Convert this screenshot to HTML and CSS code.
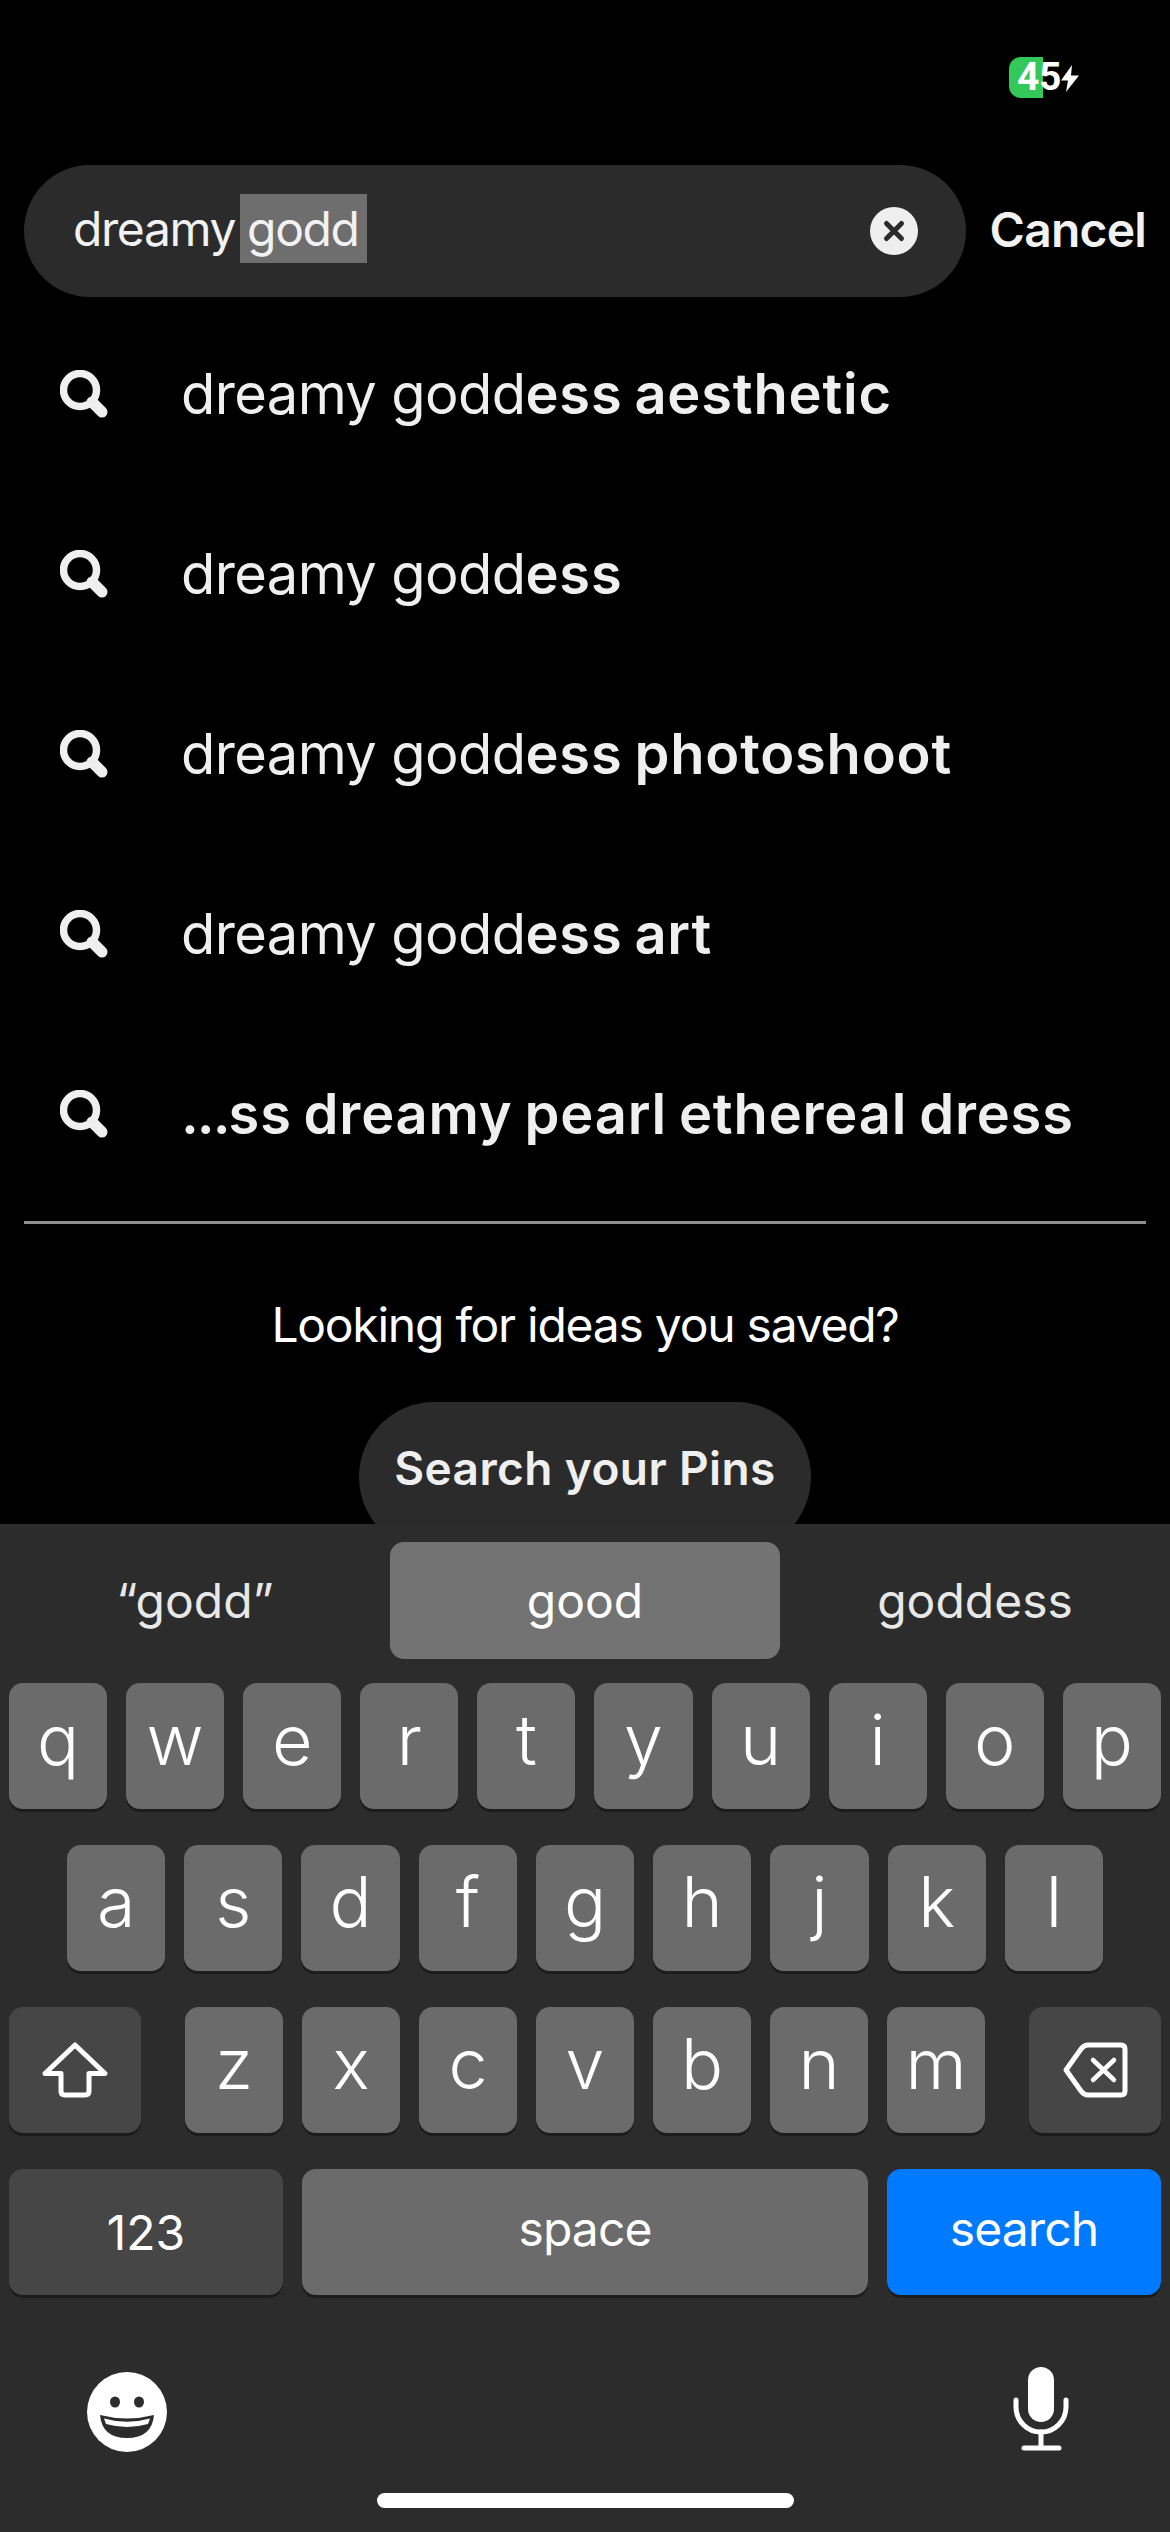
FILE: index.html
```html
<!DOCTYPE html>
<html lang="en">
<head>
    <meta charset="UTF-8">
    <meta name="viewport" content="width=device-width, initial-scale=1.0">
    <title>Search</title>
    <link rel="stylesheet" href="styles.css">
</head>
<body>
    <svg class="sprite" width="0" height="0">
        <symbol id="search-icon" viewBox="0 0 48 48">
            <circle cx="20" cy="20" r="16.5" fill="none" stroke="currentColor" stroke-width="7.5"/>
            <line x1="32" y1="32" x2="42" y2="42" stroke="currentColor" stroke-width="11" stroke-linecap="round"/>
        </symbol>
    </svg>

    <main class="screen">
        <div class="status">
            <div class="battery">
                <span class="battery-level"></span>
                <span class="battery-text">45</span>
            </div>
            <svg class="bolt" viewBox="0 0 18 27"><path d="M11 0 0 15.500h7L5 27 18 10.500h-8z" fill="#fff"/></svg>
        </div>

        <div class="search-bar">
            <div class="search-pill">
                <span class="query">dreamy <span class="selected">godd</span></span>
                <svg class="clear" viewBox="0 0 48 48">
                    <circle cx="24" cy="24" r="24" fill="#efefef"/>
                    <path d="M16.500 16.500l15 15m0-15l-15 15" stroke="#2b2b2b" stroke-width="5" stroke-linecap="round"/>
                </svg>
            </div>
            <span class="cancel">Cancel</span>
        </div>

        <ul class="results">
            <li class="result"><svg class="result-icon"><use href="#search-icon"/></svg><span>dreamy godd<b>ess aesthetic</b></span></li>
            <li class="result"><svg class="result-icon"><use href="#search-icon"/></svg><span>dreamy godd<b>ess</b></span></li>
            <li class="result"><svg class="result-icon"><use href="#search-icon"/></svg><span>dreamy godd<b>ess photoshoot</b></span></li>
            <li class="result"><svg class="result-icon"><use href="#search-icon"/></svg><span>dreamy godd<b>ess art</b></span></li>
            <li class="result"><svg class="result-icon"><use href="#search-icon"/></svg><span><b><span class="dots">...</span>ss dreamy pearl ethereal dress</b></span></li>
        </ul>

        <hr class="divider">

        <p class="saved-text">Looking for ideas you saved?</p>
        <div class="pins-button">Search your Pins</div>
    </main>

    <section class="keyboard">
        <div class="suggestions">
            <div class="suggestion">“godd”</div>
            <div class="suggestion suggestion-active">good</div>
            <div class="suggestion">goddess</div>
        </div>

        <div class="key-row">
            <div class="key">q</div><div class="key">w</div><div class="key">e</div><div class="key">r</div><div class="key">t</div>
            <div class="key">y</div><div class="key">u</div><div class="key">i</div><div class="key">o</div><div class="key">p</div>
        </div>
        <div class="key-row key-row-middle">
            <div class="key">a</div><div class="key">s</div><div class="key">d</div><div class="key">f</div><div class="key">g</div>
            <div class="key">h</div><div class="key">j</div><div class="key">k</div><div class="key">l</div>
        </div>
        <div class="key-row key-row-split">
            <div class="key key-dark key-side">
                <svg class="key-icon" viewBox="0 0 66 56"><path d="M33 3 63 31.500H47V49q0 4-4 4H23q-4 0-4-4V31.500H3z" fill="none" stroke="#fff" stroke-width="5" stroke-linejoin="round"/></svg>
            </div>
            <div class="letters">
                <div class="key">z</div><div class="key">x</div><div class="key">c</div><div class="key">v</div>
                <div class="key">b</div><div class="key">n</div><div class="key">m</div>
            </div>
            <div class="key key-dark key-side">
                <svg class="key-icon" viewBox="0 0 66 56"><path d="M4 28 19 7q3-4 7-4h33q4 0 4 4v42q0 4-4 4H26q-4 0-7-4z" fill="none" stroke="#fff" stroke-width="5" stroke-linejoin="round"/><path d="M31 18l21 20m0-20L31 38" stroke="#fff" stroke-width="4.500" stroke-linecap="round"/></svg>
            </div>
        </div>
        <div class="key-row">
            <div class="key key-dark key-wide key-label">123</div>
            <div class="key key-space key-label key-label-high">space</div>
            <div class="key key-blue key-wide key-label key-label-high">search</div>
        </div>

        <div class="keyboard-footer">
            <svg class="emoji" viewBox="0 0 80 80">
                <circle cx="40" cy="40" r="40" fill="#fff"/>
                <ellipse cx="28" cy="30" rx="5" ry="5.500" fill="#2c2c2c"/>
                <ellipse cx="52" cy="30" rx="5" ry="5.500" fill="#2c2c2c"/>
                <path d="M13 43Q40 50 67 43 65 66 40 66 15 66 13 43z" fill="#2c2c2c"/>
                <path d="M17 46.500Q40 53 63 46.500L61 52Q40 58 19 52z" fill="#fff"/>
            </svg>
            <svg class="mic" viewBox="0 0 64 90">
                <rect x="18" y="2" width="26" height="55" rx="13" fill="#fff"/>
                <path d="M6 35v7a25 25 0 0 0 50 0v-7" fill="none" stroke="#fff" stroke-width="5" stroke-linecap="round"/>
                <path d="M31 67v16M14 83h35" fill="none" stroke="#fff" stroke-width="5" stroke-linecap="round"/>
            </svg>
        </div>
        <div class="home-bar"></div>
    </section>
</body>
</html>
```

FILE: styles.css
```css
* {
    box-sizing: border-box;
}

html, body {
    margin: 0;
    padding: 0;
}

body {
    width: 1170px;
    height: 2532px;
    background-color: #000;
    color: #fff;
    font-family: 'Inter', 'Liberation Sans', sans-serif;
    overflow: hidden;
}

.sprite {
    display: block;
    height: 0;
}

.screen {
    height: 1524px;
    overflow: hidden;
}

/* status bar */
.status {
    height: 165px;
    padding: 57px 91px 0 0;
    display: flex;
    justify-content: flex-end;
    align-items: flex-start;
}

.battery {
    position: relative;
    width: 49px;
    height: 41px;
    margin-right: 3px;
}

.battery-level {
    position: absolute;
    left: 0;
    top: 0;
    width: 34px;
    height: 41px;
    background-color: #34c759;
    border-radius: 12px 0 0 12px;
}

.battery-text {
    position: absolute;
    left: 8px;
    top: 0;
    font-family: 'Roboto', sans-serif;
    font-size: 39px;
    line-height: 41px;
    font-weight: 700;
    letter-spacing: -0.5px;
}

.bolt {
    width: 18px;
    height: 27px;
    margin-top: 8px;
}

/* search field */
.search-bar {
    display: flex;
    align-items: center;
    padding: 0 24px;
    justify-content: space-between;
}

.search-pill {
    width: 942px;
    height: 132px;
    background-color: #2b2b2b;
    border-radius: 66px;
    padding: 0 48px 0 49px;
    display: flex;
    align-items: center;
    justify-content: space-between;
}

.query {
    font-size: 48px;
    letter-spacing: -1.4px;
    color: #f2f2f2;
    padding-bottom: 6px;
}

.selected {
    display: inline-block;
    background-color: #6e6e6e;
    height: 69px;
    line-height: 69px;
    padding: 0 8px 0 7px;
    margin-left: -7px;
}

.clear {
    width: 48px;
    height: 48px;
}

.cancel {
    font-size: 48px;
    font-weight: 600;
    letter-spacing: -0.8px;
    color: #f2f2f2;
    padding-bottom: 3px;
}

/* results */
.results {
    list-style-type: none;
    margin: 7px 0 0;
    padding: 0;
}

.result {
    height: 180px;
    padding-left: 60px;
    display: flex;
    align-items: center;
    font-size: 56px;
    letter-spacing: -0.6px;
    color: #efefef;
}

.result b {
    font-weight: 600;
    letter-spacing: 0.8px;
    word-spacing: -3px;
}

.result .dots {
    letter-spacing: -2px;
}

.result-icon {
    width: 48px;
    height: 48px;
    margin-right: 73px;
    color: #efefef;
    flex-shrink: 0;
}

.divider {
    height: 3px;
    margin: 17px 24px 0;
    border: none;
    background-color: #8e8e8e;
}

.saved-text {
    margin: 70px 0 0;
    text-align: center;
    font-size: 48px;
    line-height: 62px;
    letter-spacing: -1.25px;
}

.pins-button {
    width: 452px;
    height: 150px;
    margin: 46px auto 0;
    background-color: #2b2b2b;
    border-radius: 75px;
    text-align: center;
    line-height: 132px;
    font-size: 46px;
    font-weight: 600;
    letter-spacing: 0.4px;
    color: #efefef;
}

/* keyboard */
.keyboard {
    height: 1008px;
    padding-top: 18px;
    background-color: #2c2c2c;
}

.suggestions {
    display: grid;
    grid-template-columns: 390px 390px 390px;
    height: 117px;
    margin-bottom: 24px;
}

.suggestion {
    display: flex;
    align-items: center;
    justify-content: center;
    font-size: 48px;
    color: #e8e8e8;
    border-radius: 14px;
}

.suggestion-active {
    background-color: #737373;
    color: #fff;
}

.key-row {
    display: flex;
    gap: 19px;
    height: 126px;
    padding: 0 9px;
    margin-bottom: 36px;
}

.key-row-middle {
    padding: 0 67px;
}

.key-row-split {
    justify-content: space-between;
}

.letters {
    display: flex;
    gap: 19px;
}

.key {
    flex: 1;
    display: flex;
    align-items: center;
    justify-content: center;
    height: 126px;
    padding-bottom: 14px;
    background-color: #6b6b6b;
    border-radius: 14px;
    box-shadow: 0 3px 0 #1c1c1c;
    font-size: 70px;
    font-weight: 300;
}

.letters .key {
    flex: none;
    width: 98px;
}

.key-dark {
    background-color: #464646;
}

.key-side {
    flex: none;
    width: 132px;
    padding-bottom: 0;
}

.key-wide {
    flex: none;
    width: 274px;
}

.key-space {
    flex: 1;
}

.key-blue {
    background-color: #007aff;
}

.key-label {
    padding-bottom: 0;
    font-size: 48px;
    font-weight: 400;
}

.key-label-high {
    padding-bottom: 8px;
    letter-spacing: -0.9px;
}

.key-icon {
    width: 66px;
    height: 56px;
}

.keyboard-footer {
    display: flex;
    justify-content: space-between;
    align-items: center;
    height: 90px;
    margin-top: 70px;
    padding: 0 96px 0 87px;
}

.emoji {
    width: 80px;
    height: 80px;
    margin-top: 4px;
}

.mic {
    width: 64px;
    height: 90px;
}

.home-bar {
    width: 417px;
    height: 15px;
    margin: 38px auto 0;
    background-color: #fff;
    border-radius: 8px;
}
```
